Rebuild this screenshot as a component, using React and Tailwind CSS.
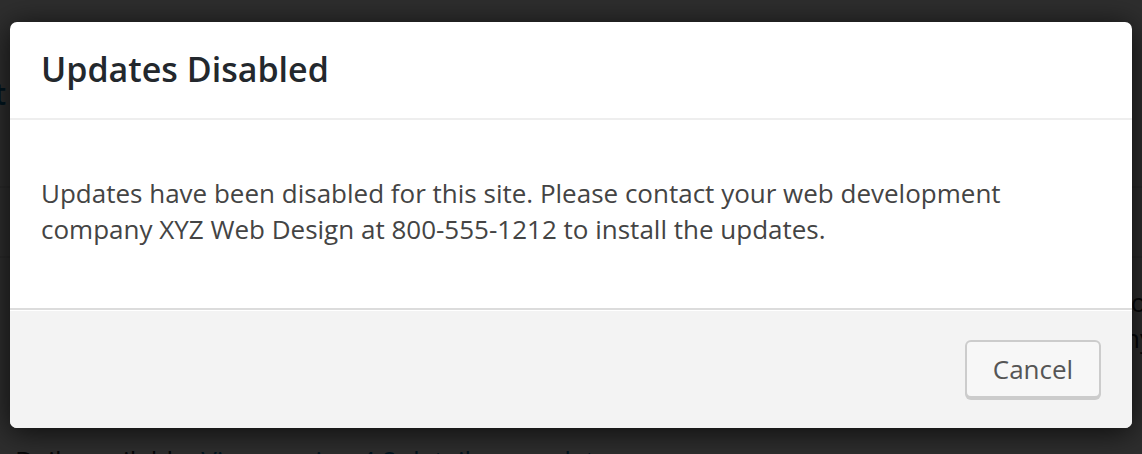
export default function App() {
  return (
    <div className="relative h-[454px] w-[1142px] overflow-hidden bg-white font-['Open_Sans',sans-serif]">
      {/* page behind the overlay */}
      <div className="flex flex-col text-[26px] leading-[36px] text-[#23282d]">
        <div className="h-[74px]" />
        <div className="-ml-[14px] text-[#0073aa] font-semibold text-[30px] leading-[40px]">it</div>
        <div className="h-[74px] border-b-2 border-[#e5e5e5]" />
        <div className="h-[70px] border-b-2 border-[#e5e5e5]" />
        <div className="h-[26px]" />
        <div className="pl-[1122px] whitespace-nowrap">for</div>
        <div className="pl-[1124px] whitespace-nowrap">ny</div>
        <div className="h-[86px]" />
        <div className="pl-[15px] whitespace-nowrap">
          Daily available. <span className="text-[#0073aa]">View version 4.8 details</span> or <span className="text-[#0073aa]">update now</span>.
        </div>
      </div>

      {/* overlay + modal */}
      <div className="absolute inset-0 bg-black/[0.82] px-[10px] pt-[22px]">
        <div className="flex h-[406px] flex-col overflow-hidden rounded-[7px] bg-white shadow-[0_4px_30px_rgba(0,0,0,0.75)]">
          <div className="flex h-[98px] shrink-0 items-center border-b-2 border-[#eeeeee] px-[31px] pb-[2px]">
            <h1 className="text-[34px] font-semibold text-[#23282d]">Updates Disabled</h1>
          </div>

          <div className="flex-1 px-[31px] pt-[55px]">
            <p className="text-[26px] leading-[36px] text-[#444444]">
              Updates have been disabled for this site. Please contact your web development
              <br />
              company XYZ Web Design at 800-555-1212 to install the updates.
            </p>
          </div>

          <div className="flex h-[120px] shrink-0 items-center justify-end border-t-2 border-[#dcdcdc] bg-[#f3f3f3] pr-[31px] shadow-[inset_0_1px_0_#ffffff]">
            <button className="h-[58px] w-[136px] rounded-[6px] border-2 border-[#cccccc] bg-[#f7f7f7] text-[26px] text-[#555555] shadow-[0_2px_0_#cccccc]">
              Cancel
            </button>
          </div>
        </div>
      </div>
    </div>
  );
}
